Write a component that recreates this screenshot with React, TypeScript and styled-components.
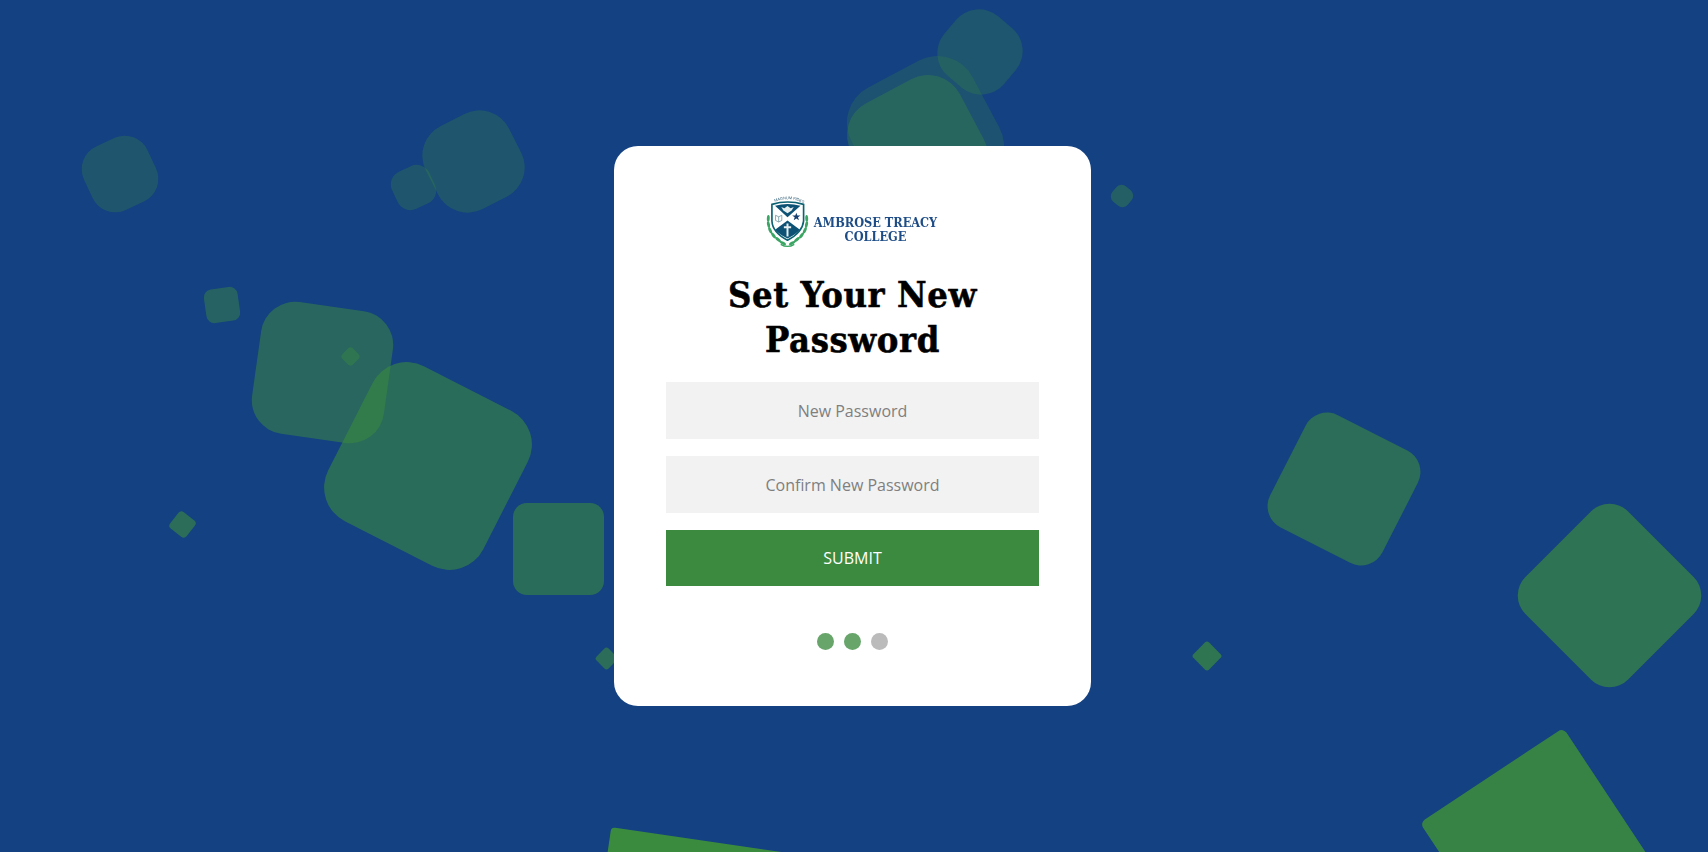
import React from "react";
import styled, { createGlobalStyle } from "styled-components";

const Global = createGlobalStyle`
  html, body { margin: 0; padding: 0; height: 100%; }
  body { background: #144181; font-family: "Open Sans", "Liberation Sans", sans-serif; overflow: hidden; }
`;

const Page = styled.main`
  position: relative;
  width: 1708px;
  height: 852px;
  overflow: hidden;
  background: #144181;
  display: flex;
  align-items: center;
  justify-content: center;
  padding-right: 3px;
  box-sizing: border-box;
`;

const Square = styled.i<{ $x: number; $y: number; $w: number; $h: number; $r: number; $rot: number; $a: number }>`
  position: absolute;
  left: ${(p) => p.$x - p.$w / 2}px;
  top: ${(p) => p.$y - p.$h / 2}px;
  width: ${(p) => p.$w}px;
  height: ${(p) => p.$h}px;
  border-radius: ${(p) => p.$r}px;
  transform: rotate(${(p) => p.$rot}deg);
  background: #3b8b3e;
  opacity: ${(p) => p.$a};
`;

const Card = styled.section`
  position: relative;
  z-index: 1;
  box-sizing: border-box;
  width: 477px;
  height: 560px;
  padding: 51px 52px 0;
  background: #fff;
  border-radius: 24px;
  display: flex;
  flex-direction: column;
  align-items: center;
`;

const Logo = styled.div`
  display: flex;
  align-items: flex-end;
  gap: 5px;
  height: 52px;
  margin-right: 2px;
  filter: blur(0.3px);
  svg { display: block; }
`;

const LogoName = styled.div`
  font-family: "DejaVu Serif Condensed", "DejaVu Serif", serif;
  font-weight: 700;
  font-size: 12.6px;
  line-height: 14px;
  text-align: center;
  color: #1d4c86;
  white-space: nowrap;
  margin-bottom: 5px;
`;

const Title = styled.h1`
  margin: 23px 0 0;
  width: 373px;
  font-family: "DejaVu Serif Condensed", "DejaVu Serif", serif;
  font-weight: 700;
  font-size: 36px;
  line-height: 45px;
  letter-spacing: 0.6px;
  -webkit-text-stroke: 0.5px #000;
  text-align: center;
  color: #000;
`;

const Form = styled.form`
  margin-top: 20px;
  width: 373px;
  display: flex;
  flex-direction: column;
`;

const Field = styled.input`
  box-sizing: border-box;
  width: 100%;
  height: 57px;
  margin-bottom: 17px;
  border: 0;
  padding: 0 16px;
  background: #f2f2f2;
  font-family: "Open Sans", "Liberation Sans", sans-serif;
  font-size: 16px;
  text-align: center;
  outline: none;
  &::placeholder { color: #7f7f7f; opacity: 1; }
`;

const Submit = styled.button`
  height: 56px;
  border: 0;
  background: #3b8a40;
  color: #fff;
  font-family: "Open Sans", "Liberation Sans", sans-serif;
  font-size: 16px;
  padding: 0;
  text-transform: uppercase;
`;

const Steps = styled.div`
  margin-top: 47px;
  display: flex;
  justify-content: center;
  gap: 10px;
`;

const Dot = styled.span<{ $on?: boolean }>`
  width: 17px;
  height: 17px;
  border-radius: 50%;
  background: ${(p) => (p.$on ? "#67a56a" : "#bbbbbb")};
`;

const squares = [
  { x: 120.4, y: 173.7, w: 70, h: 70, r: 25, rot: -25, a: 0.29 },
  { x: 473, y: 161, w: 93, h: 93, r: 33, rot: -27, a: 0.29 },
  { x: 413, y: 187, w: 41, h: 41, r: 14, rot: -25, a: 0.29 },
  { x: 980, y: 52, w: 78, h: 78, r: 30, rot: 40, a: 0.27 },
  { x: 925, y: 134, w: 137, h: 137, r: 40, rot: -28, a: 0.24 },
  { x: 917, y: 145, w: 123, h: 123, r: 36, rot: -28, a: 0.35 },
  { x: 1122, y: 196, w: 20, h: 20, r: 7, rot: 40, a: 0.4 },
  { x: 221.7, y: 305, w: 34, h: 34, r: 8, rot: -8, a: 0.45 },
  { x: 322.4, y: 372, w: 133, h: 133, r: 34, rot: 8, a: 0.5 },
  { x: 350, y: 356, w: 15, h: 15, r: 4, rot: 45, a: 0.4 },
  { x: 428, y: 465.7, w: 174, h: 174, r: 38, rot: 27, a: 0.58 },
  { x: 558, y: 549, w: 91, h: 92, r: 14, rot: 0, a: 0.58 },
  { x: 182, y: 524, w: 21, h: 21, r: 4, rot: 38, a: 0.6 },
  { x: 606, y: 658, w: 17, h: 17, r: 3, rot: 45, a: 0.6 },
  { x: 1344, y: 489, w: 126, h: 126, r: 24, rot: 27, a: 0.6 },
  { x: 1609, y: 595, w: 145, h: 145, r: 26, rot: 45, a: 0.68 },
  { x: 1207, y: 656, w: 22, h: 22, r: 3, rot: 45, a: 0.7 },
  { x: 1538.5, y: 846.8, w: 172, h: 172, r: 6, rot: -33.5, a: 0.9 },
  { x: 693, y: 925, w: 190, h: 170, r: 4, rot: 8.3, a: 1 },
];

const leaves = [
  [2, 22.5, 3], [2.2, 28.5, -10], [3.8, 34, -24], [7, 39, -38], [11.5, 43, -50], [16, 46.3, -62],
];

const Crest = () => (
  <svg width="43" height="54" viewBox="0 0 41 52" aria-hidden="true">
    <path id="motto" d="M6 7.5 Q20.5 0.5 35 7.5" fill="none" />
    <text fontFamily="Liberation Sans, sans-serif" fontSize="3.7" fill="#2d5a73">
      <textPath href="#motto" startOffset="8%">MAGNUM FIDES</textPath>
    </text>
    <path d="M5.5 9 Q20.5 4.5 36 9 L36 25 Q35 36 20.5 43.5 Q6 36 5.5 25 Z" fill="#fff" stroke="#0c6272" strokeWidth="1.6" />
    <path d="M8.5 10.3 Q20.5 6.8 33 10.3 L20.5 21.5 Z" fill="#0d5274" />
    <path d="M20.5 24.5 L32.5 33.5 Q28.5 38 20.5 42 Q12.5 38 8.5 33.5 Z" fill="#0d5274" />
    <path d="M14.5 11.5 L17.5 12.8 L20.5 10.5 L23.5 12.8 L26.5 11.5 L24.5 15 L20.5 17.5 L16.5 15 Z" fill="#e6eef0" />
    <path d="M20.5 27.5 V40 M17 31 H24" stroke="#e6eef0" strokeWidth="1.9" />
    <path d="M9 19.5 L12 21 L15 19.5 V24.5 L12 26 L9 24.5 Z M12 21 V26" fill="none" stroke="#5f8f98" strokeWidth="0.7" />
    <path d="M29 17 L30 19.8 L33 19.8 L30.6 21.5 L31.5 24.3 L29 22.6 L26.5 24.3 L27.4 21.5 L25 19.8 L28 19.8 Z" fill="#143f70" />
    {leaves.map(([x, y, rot]) => (
      <React.Fragment key={`${x}-${y}`}>
        <ellipse cx={x} cy={y} rx="1.4" ry="3.3" fill="#3ba564" transform={`rotate(${rot} ${x} ${y})`} />
        <ellipse cx={41 - x} cy={y} rx="1.4" ry="3.3" fill="#3ba564" transform={`rotate(${-rot} ${41 - x} ${y})`} />
      </React.Fragment>
    ))}
    <path d="M14 47.5 Q20.5 51.5 27 47.5" fill="none" stroke="#3ba564" strokeWidth="1.3" />
  </svg>
);

export default function App() {
  return (
    <Page>
      <Global />
      {squares.map((s, i) => (
        <Square key={i} $x={s.x} $y={s.y} $w={s.w} $h={s.h} $r={s.r} $rot={s.rot} $a={s.a} />
      ))}
      <Card>
        <Logo>
          <Crest />
          <LogoName>
            AMBROSE TREACY
            <br />
            COLLEGE
          </LogoName>
        </Logo>
        <Title>
          Set Your New
          <br />
          Password
        </Title>
        <Form onSubmit={(e) => e.preventDefault()}>
          <Field type="password" placeholder="New Password" />
          <Field type="password" placeholder="Confirm New Password" />
          <Submit type="submit">Submit</Submit>
        </Form>
        <Steps>
          <Dot $on />
          <Dot $on />
          <Dot />
        </Steps>
      </Card>
    </Page>
  );
}
